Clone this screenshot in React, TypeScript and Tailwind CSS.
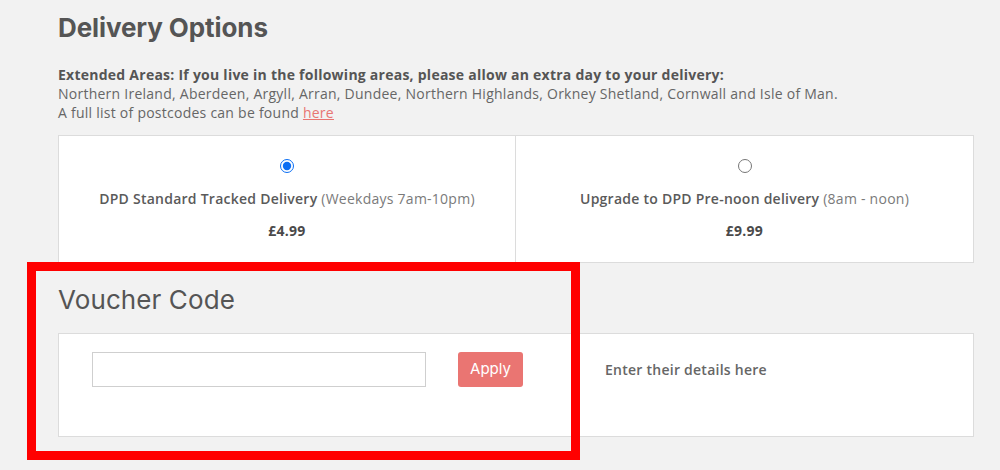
import { useState } from "react"

const body = { fontFamily: '"Open Sans", "Liberation Sans", sans-serif' }
const heading = { fontFamily: 'Inter, "Liberation Sans", sans-serif' }

interface OptionProps {
  title: string
  note: string
  price: string
  checked: boolean
  onSelect: () => void
}

function DeliveryOption({ title, note, price, checked, onSelect }: OptionProps) {
  return (
    <label className="flex flex-col items-center pt-[23px] pb-[20px] cursor-pointer">
      <input
        type="radio"
        name="delivery"
        checked={checked}
        onChange={onSelect}
        className="size-[14px] m-0 accent-[#0b6ef3]"
      />
      <p className="mt-[15px] text-[14px] leading-[22px] tracking-[0.25px] text-[#666]">
        <span className="font-semibold text-[#5a5a5a]">{title}</span>
        {" "}
        <span className="text-[#7a7a7a]">{note}</span>
      </p>
      <p className="mt-[10px] text-[14px] leading-[22px] tracking-[0.25px] font-bold text-[#4a4a4a]">{price}</p>
    </label>
  )
}

export default function App() {
  const [option, setOption] = useState("standard")

  return (
    <div className="relative w-[1000px] h-[470px] overflow-hidden bg-[#f2f2f2]" style={body}>
      <div className="pl-[58px] pr-[26px] pt-[12px]">
        <h1 className="text-[26px] leading-[32px] font-bold text-[#555] tracking-[-0.1px]" style={heading}>
          Delivery Options
        </h1>

        <div className="mt-[21px] text-[14px] leading-[19px] tracking-[0.25px] text-[#666]">
          <p className="font-bold text-[#555]">
            Extended Areas: If you live in the following areas, please allow an extra day to your delivery:
          </p>
          <p>Northern Ireland, Aberdeen, Argyll, Arran, Dundee, Northern Highlands, Orkney Shetland, Cornwall and Isle of Man.</p>
          <p>
            A full list of postcodes can be found{" "}
            <a href="#" className="text-[#e87572] underline">here</a>
          </p>
        </div>

        <div className="mt-[13px] grid grid-cols-2 bg-white border border-[#dcdcdc]">
          <div className="border-r border-[#dcdcdc]">
            <DeliveryOption
              title="DPD Standard Tracked Delivery"
              note="(Weekdays 7am-10pm)"
              price="£4.99"
              checked={option === "standard"}
              onSelect={() => setOption("standard")}
            />
          </div>
          <DeliveryOption
            title="Upgrade to DPD Pre-noon delivery"
            note="(8am - noon)"
            price="£9.99"
            checked={option === "prenoon"}
            onSelect={() => setOption("prenoon")}
          />
        </div>

        <h2 className="mt-[21px] text-[26px] leading-[32px] font-normal text-[#555] tracking-[0.1px]" style={heading}>
          Voucher Code
        </h2>

        <div className="mt-[17px] h-[104px] flex items-start pt-[18px] bg-white border border-[#dcdcdc]">
          <input
            type="text"
            className="ml-[33px] w-[334px] h-[35px] border border-[#cfcfcf] bg-white px-2 text-[14px] outline-none"
          />
          <button
            type="button"
            className="ml-[32px] w-[65px] h-[35px] rounded-[3px] bg-[#ea7572] text-white text-[15px]"
            style={heading}
          >
            Apply
          </button>
          <p className="ml-[82px] mt-[7px] text-[14px] leading-[22px] tracking-[0.25px] font-semibold text-[#666]">
            Enter their details here
          </p>
        </div>
      </div>

      {/* annotation frame over the voucher block */}
      <div className="absolute left-[27px] top-[262px] w-[553px] h-[198px] border-[9px] border-[#ff0000]" />
    </div>
  )
}
